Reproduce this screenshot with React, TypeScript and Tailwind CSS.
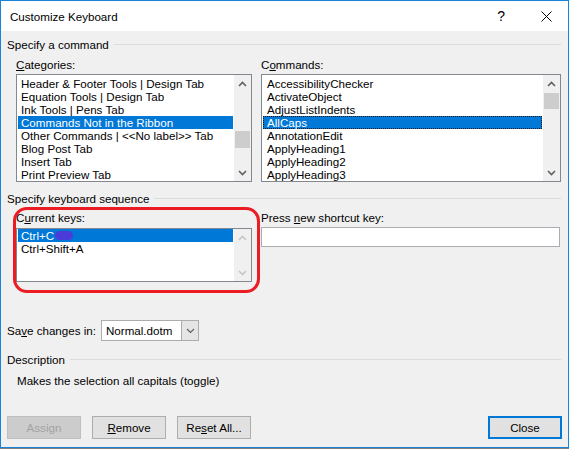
import React from 'react'

const categories = [
  'Header & Footer Tools | Design Tab',
  'Equation Tools | Design Tab',
  'Ink Tools | Pens Tab',
  'Commands Not in the Ribbon',
  'Other Commands | <<No label>> Tab',
  'Blog Post Tab',
  'Insert Tab',
  'Print Preview Tab',
]

const commands = [
  'AccessibilityChecker',
  'ActivateObject',
  'AdjustListIndents',
  'AllCaps',
  'AnnotationEdit',
  'ApplyHeading1',
  'ApplyHeading2',
  'ApplyHeading3',
]

function Chevron({ up, disabled }: { up?: boolean; disabled?: boolean }) {
  return (
    <svg width="9" height="6" viewBox="0 0 9 6">
      <path
        d={up ? 'M1 5 L4.5 1.5 L8 5' : 'M1 1 L4.5 4.5 L8 1'}
        fill="none"
        stroke={disabled ? '#c6c6c6' : '#606060'}
        strokeWidth="1.6"
      />
    </svg>
  )
}

function Scrollbar({ thumbTop, thumbH, disabled }: { thumbTop?: number; thumbH?: number; disabled?: boolean }) {
  return (
    <div className="flex w-[17px] flex-col bg-[#f0f0f0]">
      <div className="flex h-[17px] items-center justify-center">
        <Chevron up disabled={disabled} />
      </div>
      <div className="flex-1">
        {thumbH ? <div className="mx-px bg-[#cdcdcd]" style={{ marginTop: thumbTop, height: thumbH }} /> : null}
      </div>
      <div className="flex h-[17px] items-center justify-center">
        <Chevron disabled={disabled} />
      </div>
    </div>
  )
}

function Heading({ children }: { children: React.ReactNode }) {
  return (
    <div className="flex items-center gap-[5px] pr-px">
      <span className="leading-[15px]">{children}</span>
      <div className="h-px flex-1 bg-[#dcdcdc]" />
    </div>
  )
}

function Btn({ children, disabled, primary }: { children: React.ReactNode; disabled?: boolean; primary?: boolean }) {
  let cls = 'border border-[#adadad] bg-[#e1e1e1]'
  if (disabled) cls = 'border border-[#bfbfbf] bg-[#cccccc] text-[#a3a3a3]'
  if (primary) cls = 'border-2 border-[#0078d7] bg-[#e1e1e1]'
  return (
    <div className={`flex h-[23px] w-[74px] items-center justify-center leading-[15px] ${cls}`}>
      {children}
    </div>
  )
}

export default function App() {
  return (
    <div className="h-[449px] w-[569px] bg-[#7d7d7d] font-['Liberation_Sans',Arial,sans-serif] text-[11.6px] text-black">
      <div className="flex h-[448px] flex-col border border-[#1883d7] bg-[#f0f0f0]">
        <div className="flex h-[30px] items-center bg-white pl-[9px]">
          <span className="flex-1 leading-[15px]">Customize Keyboard</span>
          <span className="mr-[36px] text-[14px]">?</span>
          <svg width="11" height="11" viewBox="0 0 11 11" className="mr-[16px]">
            <path d="M0.5 0.5 L10.5 10.5 M10.5 0.5 L0.5 10.5" stroke="#000" strokeWidth="1" />
          </svg>
        </div>

        <div className="flex flex-1 flex-col px-[6px] pt-[6px]">
          <Heading>Specify a command</Heading>

          <div className="mt-[5px] flex gap-[9px] pl-[9px] pr-px">
            <div className="flex w-[236px] flex-col">
              <span className="leading-[15px]">
                <u>C</u>ategories:
              </span>
              <div className="mt-[2px] flex h-[108px] border border-[#828790] bg-white">
                <div className="min-w-0 flex-1 overflow-hidden p-px pt-[2px]">
                  {categories.map((c, i) => (
                    <div
                      key={c}
                      className={`h-[13px] whitespace-nowrap pl-[3px] leading-[13px] ${i === 3 ? 'bg-[#0078d7] text-white' : ''}`}
                    >
                      {c}
                    </div>
                  ))}
                </div>
                <Scrollbar thumbTop={39} thumbH={17} />
              </div>
            </div>

            <div className="flex flex-1 flex-col">
              <span className="leading-[15px]">
                C<u>o</u>mmands:
              </span>
              <div className="mt-[2px] flex h-[108px] border border-[#828790] bg-white">
                <div className="min-w-0 flex-1 overflow-hidden p-px pt-[2px]">
                  {commands.map((c, i) => (
                    <div
                      key={c}
                      className={`h-[13px] whitespace-nowrap pl-[3px] leading-[12px] ${i === 3 ? 'border border-dotted border-[#1a1a1a] bg-[#0078d7] pl-[2px] text-white' : 'border border-transparent'}`}
                    >
                      {c}
                    </div>
                  ))}
                </div>
                <Scrollbar thumbTop={1} thumbH={16} />
              </div>
            </div>
          </div>

          <div className="mt-[9px]">
            <Heading>Specify keyboard sequence</Heading>
          </div>

          <div className="relative mt-[4px] flex gap-[9px] pl-[9px] pr-[2px]">
            <div className="flex w-[236px] flex-col">
              <span className="leading-[15px]">
                C<u>u</u>rrent keys:
              </span>
              <div className="mt-[3px] flex h-[54px] border border-[#828790] bg-white">
                <div className="min-w-0 flex-1 overflow-hidden p-px pt-0">
                  <div className="flex h-[13px] items-center whitespace-nowrap bg-[#0078d7] pl-[3px] leading-[13px] text-white">
                    Ctrl+C
                    <span className="ml-[1px] inline-block h-[9px] w-[18px] rounded-full bg-[#4b3bd8]" />
                  </div>
                  <div className="h-[13px] whitespace-nowrap pl-[3px] leading-[13px]">Ctrl+Shift+A</div>
                </div>
                <Scrollbar disabled />
              </div>
            </div>

            <div className="flex flex-1 flex-col">
              <span className="leading-[15px]">
                Press <u>n</u>ew shortcut key:
              </span>
              <div className="mt-[2px] h-[20px] border border-[#abadb3] bg-white" />
            </div>

            <div className="absolute left-[6px] top-[-3px] h-[86px] w-[247px] rounded-[14px] border-[3px] border-[#ec1c24]" />
          </div>

          <div className="mt-[38px] flex items-center">
            <span className="w-[94px] leading-[15px]">
              Sa<u>v</u>e changes in:
            </span>
            <div className="flex h-[21px] w-[98px] border border-[#acacac] bg-white">
              <span className="flex-1 pl-[4px] leading-[19px]">Normal.dotm</span>
              <div className="flex w-[17px] items-center justify-center border-l border-[#acacac] bg-[#e5e5e5]">
                <svg width="9" height="6" viewBox="0 0 9 6">
                  <path d="M1 1 L4.5 4.5 L8 1" fill="none" stroke="#606060" strokeWidth="1.2" />
                </svg>
              </div>
            </div>
          </div>

          <div className="mt-[11px]">
            <Heading>Description</Heading>
          </div>
          <div className="mt-[6px] pl-[10px] leading-[15px]">Makes the selection all capitals (toggle)</div>

          <div className="mt-[28px] flex gap-[11px]">
            <Btn disabled>Assign</Btn>
            <Btn>
              <span>
                <u>R</u>emove
              </span>
            </Btn>
            <Btn>
              <span>
                Re<u>s</u>et All...
              </span>
            </Btn>
            <div className="flex-1" />
            <Btn primary>Close</Btn>
          </div>
        </div>
      </div>
    </div>
  )
}
